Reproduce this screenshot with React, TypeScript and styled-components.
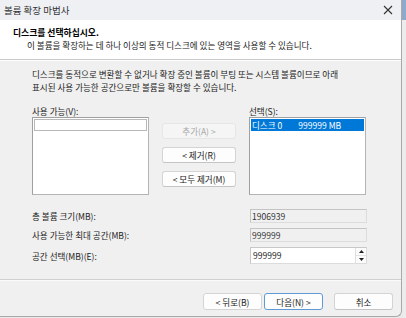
import React from 'react';
import styled, { createGlobalStyle } from 'styled-components';

const GlobalStyle = createGlobalStyle`
    html, body {
        margin: 0;
        padding: 0;
        background: #e9e9e9;
        overflow: hidden;
    }
    body {
        font-family: "Noto Sans CJK KR", "Noto Sans", sans-serif;
        font-size: 8.55px;
        color: #1a1a1a;
    }
`;

export default function App() {
    return (
        <Screen>
            <GlobalStyle />
            <Window>
                <TitleBar>
                    <Title>볼륨 확장 마법사</Title>
                    <CloseButton aria-label="닫기">
                        <svg width="10" height="10" viewBox="0 0 10 10">
                            <path d="M1 1 L9 9 M9 1 L1 9" stroke="#333" strokeWidth="1.1" />
                        </svg>
                    </CloseButton>
                </TitleBar>
                <Header>
                    <HeaderTitle>디스크를 선택하십시오.</HeaderTitle>
                    <HeaderSub>이 볼륨을 확장하는 데 하나 이상의 동적 디스크에 있는 영역을 사용할 수 있습니다.</HeaderSub>
                </Header>
                <Body>
                    <Intro>
                        디스크를 동적으로 변환할 수 없거나 확장 중인 볼륨이 부팅 또는 시스템 볼륨이므로 아래
                        <br />
                        표시된 사용 가능한 공간으로만 볼륨을 확장할 수 있습니다.
                    </Intro>
                    <Picker>
                        <Column>
                            <Label>사용 가능(V):</Label>
                            <ListBox>
                                <EmptyItem />
                            </ListBox>
                        </Column>
                        <MoveButtons>
                            <Button disabled>추가(A) &gt;</Button>
                            <Button>&lt; 제거(R)</Button>
                            <Button>&lt; 모두 제거(M)</Button>
                        </MoveButtons>
                        <Column>
                            <Label>선택(S):</Label>
                            <ListBox>
                                <SelectedItem>
                                    <span>디스크 0</span>
                                    <span>999999 MB</span>
                                </SelectedItem>
                            </ListBox>
                        </Column>
                    </Picker>
                    <Fields>
                        <FieldLabel>총 볼륨 크기(MB):</FieldLabel>
                        <ReadOnlyBox>1906939</ReadOnlyBox>
                        <FieldLabel>사용 가능한 최대 공간(MB):</FieldLabel>
                        <ReadOnlyBox>999999</ReadOnlyBox>
                        <FieldLabel>공간 선택(MB)(E):</FieldLabel>
                        <Spinner>
                            <SpinValue>999999</SpinValue>
                            <SpinArrows>
                                <SpinArrow>
                                    <svg width="5" height="3" viewBox="0 0 5 3"><path d="M0 3 L2.5 0 L5 3 Z" fill="#222" /></svg>
                                </SpinArrow>
                                <SpinArrow>
                                    <svg width="5" height="3" viewBox="0 0 5 3"><path d="M0 0 L2.5 3 L5 0 Z" fill="#222" /></svg>
                                </SpinArrow>
                            </SpinArrows>
                        </Spinner>
                    </Fields>
                </Body>
                <Footer>
                    <NavButton>&lt; 뒤로(B)</NavButton>
                    <NavButton primary>다음(N) &gt;</NavButton>
                    <CancelButton>취소</CancelButton>
                </Footer>
            </Window>
            <SideStrip>
                <SideAccent />
            </SideStrip>
        </Screen>
    );
}

const Screen = styled.div`
    display: flex;
    width: 406px;
    height: 318px;
`;

const Window = styled.div`
    width: 401px;
    height: 316px;
    display: flex;
    flex-direction: column;
    background: #f0f0f0;
    border-right: 1px solid #a9a9a9;
    border-bottom: 1px solid #a9a9a9;
    border-bottom-right-radius: 6px;
    overflow: hidden;
`;

const SideStrip = styled.div`
    flex: 1;
    display: flex;
    flex-direction: column;
    background: #ececec;
`;

const SideAccent = styled.div`
    height: 20px;
    background: #8ea9c9;
`;

const TitleBar = styled.div`
    height: 20px;
    display: flex;
    align-items: center;
    justify-content: space-between;
    padding: 0 6px 0 4px;
    background: #eef0f4;
`;

const Title = styled.div`
    font-size: 9.5px;
    color: #333;
`;

const CloseButton = styled.div`
    width: 14px;
    height: 14px;
    display: flex;
    align-items: center;
    justify-content: center;
`;

const Header = styled.div`
    height: 40px;
    box-sizing: border-box;
    background: #fff;
    padding: 6px 0 0 13px;
    border-bottom: 1px solid #c9c9c9;
    box-shadow: 0 1px 0 #fff;
    line-height: 13px;
`;

const HeaderTitle = styled.div`
    font-weight: bold;
    font-size: 8.8px;
    color: #000;
`;

const HeaderSub = styled.div`
    padding-left: 14px;
    color: #222;
`;

const Body = styled.div`
    flex: 1;
    display: flex;
    flex-direction: column;
    padding: 8px 34px 0 32px;
`;

const Intro = styled.div`
    line-height: 13px;
    color: #222;
    white-space: nowrap;
`;

const Picker = styled.div`
    display: grid;
    grid-template-columns: 117px 74px 117px;
    column-gap: 13px;
    margin-top: 11px;
`;

const Column = styled.div`
    display: flex;
    flex-direction: column;
`;

const Label = styled.div`
    height: 12px;
    line-height: 12px;
    color: #222;
`;

const ListBox = styled.div`
    height: 78px;
    box-sizing: border-box;
    background: #fff;
    border: 1px solid #b4b4b4;
    border-top-color: #a0a0a0;
    border-left-color: #a0a0a0;
    padding: 1px;
`;

const EmptyItem = styled.div`
    height: 10px;
    border: 1px solid #b8b8b8;
    background: #fff;
`;

const SelectedItem = styled.div`
    height: 12px;
    display: flex;
    gap: 16px;
    align-items: center;
    padding-left: 1px;
    background: #0078d7;
    color: #fff;
`;

const MoveButtons = styled.div`
    display: flex;
    flex-direction: column;
    gap: 8px;
    padding-top: 18px;
`;

const Button = styled.button`
    height: 16px;
    padding: 0;
    box-sizing: border-box;
    font-family: inherit;
    font-size: 8.55px;
    color: #1a1a1a;
    background: #fdfdfd;
    border: 1px solid #d4d4d4;
    border-bottom-color: #c4c4c4;
    border-radius: 3px;

    &:disabled {
        color: #a6a6a6;
        background: #f5f5f5;
        border-color: #e6e6e6;
    }
`;

const Fields = styled.div`
    display: grid;
    grid-template-columns: 1fr 117px;
    row-gap: 5px;
    align-items: center;
    margin-top: 14px;
`;

const FieldLabel = styled.div`
    color: #222;
`;

const ReadOnlyBox = styled.div`
    height: 14px;
    box-sizing: border-box;
    padding-left: 1px;
    line-height: 12px;
    background: #f0f0f0;
    border: 1px solid #dcdcdc;
    border-top-color: #c4c4c4;
    border-left-color: #c4c4c4;
    color: #333;
`;

const Spinner = styled.div`
    height: 17px;
    box-sizing: border-box;
    display: flex;
    background: #fff;
    border: 1px solid #dcdcdc;
    border-top-color: #c8c8c8;
    border-left-color: #c8c8c8;
`;

const SpinValue = styled.div`
    flex: 1;
    padding-left: 2px;
    line-height: 15px;
    color: #222;
`;

const SpinArrows = styled.div`
    width: 10px;
    display: flex;
    flex-direction: column;
    border-left: 1px solid #e0e0e0;
`;

const SpinArrow = styled.div`
    flex: 1;
    display: flex;
    align-items: center;
    justify-content: center;
    background: #fbfbfb;

    & + & {
        border-top: 1px solid #e4e4e4;
    }
`;

const Footer = styled.div`
    margin-top: auto;
    height: 37px;
    box-sizing: border-box;
    display: flex;
    align-items: flex-start;
    padding: 13px 8px 0 203px;
    border-top: 1px solid #cfcfcf;
    box-shadow: inset 0 1px 0 #fafafa;
`;

const NavButton = styled(Button)<{ primary?: boolean }>`
    width: 59px;
    height: 17px;
    margin-right: 2px;
    border-color: ${({ primary }) => (primary ? '#5d9ad6' : '#d4d4d4')};
    border-width: ${({ primary }) => (primary ? '1.5px' : '1px')};
`;

const CancelButton = styled(Button)`
    width: 59px;
    height: 17px;
    margin-left: 9px;
`;
